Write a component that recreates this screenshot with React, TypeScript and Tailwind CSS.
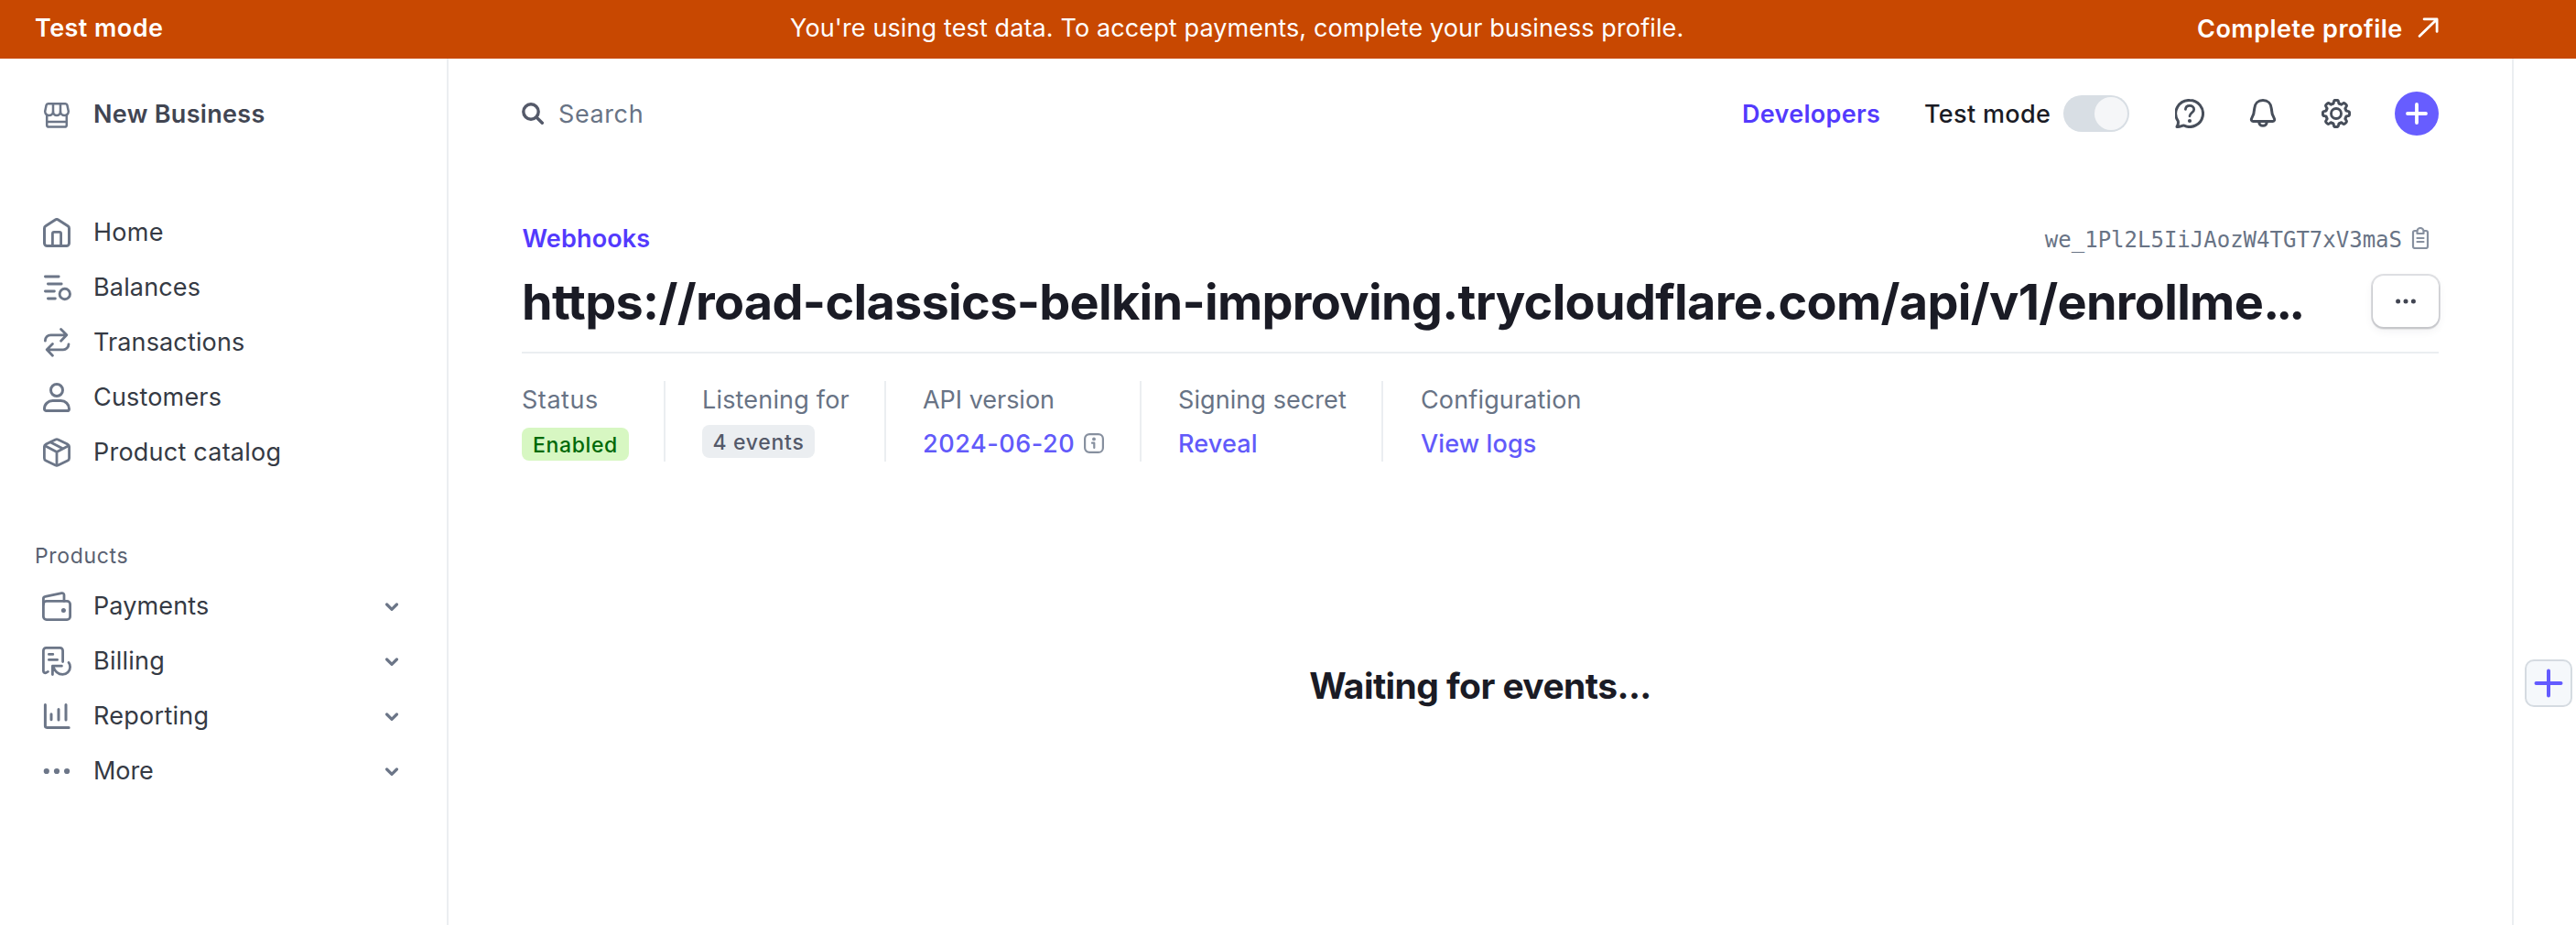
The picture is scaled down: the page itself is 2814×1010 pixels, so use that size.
import type { ReactNode } from "react";

function Icon({ children, className = "" }: { children: ReactNode; className?: string }) {
  return (
    <svg
      viewBox="0 0 16 16"
      className={`size-8 shrink-0 ${className}`}
      fill="none"
      stroke="currentColor"
      strokeWidth="1.5"
      strokeLinecap="round"
      strokeLinejoin="round"
    >
      {children}
    </svg>
  );
}

const ShopIcon = () => (
  <Icon>
    <g strokeWidth="1.25">
      <path d="M3.3 1.6h9.4c.5 0 .9.3 1 .8l.7 3.4c0 1.3-.9 2.2-2.2 2.2-1.2 0-2.2-.9-2.2-2.1 0 1.2-.9 2.1-2 2.1s-2-.9-2-2.1C6 7.1 5 8 3.8 8 2.5 8 1.6 7.1 1.6 5.8l.7-3.4c.1-.5.5-.8 1-.8z" />
      <path d="M6 1.8v4M10 1.8v4" />
      <path d="M2.6 8v5.2c0 .6.5 1.1 1.1 1.1h8.6c.6 0 1.1-.5 1.1-1.1V8M2.6 11.5h10.8" />
    </g>
  </Icon>
);

const HomeIcon = () => (
  <Icon>
    <path d="M1.25 5.6c0-.5.27-1 .7-1.26L7.2 1a1.5 1.5 0 0 1 1.6 0l5.25 3.34c.43.27.7.75.7 1.26v8.15a1.5 1.5 0 0 1-1.5 1.5H2.75a1.5 1.5 0 0 1-1.5-1.5z" />
    <path strokeWidth="1.4" strokeLinecap="butt" d="M5.7 15.2V8.5a.8.8 0 0 1 .8-.8h3a.8.8 0 0 1 .8.8v6.7" />
  </Icon>
);

const BalancesIcon = () => (
  <Icon>
    <g strokeWidth="1.4">
      <path d="M1.7 2h7.4M3.2 6h7.4M1.7 10h5M3.2 14h4" />
      <circle cx="12.4" cy="11.5" r="2.85" strokeWidth="1.45" />
    </g>
  </Icon>
);

const TransactionsIcon = () => (
  <Icon>
    <g strokeWidth="1.4">
      <path d="M1.7 7.1v-.2a3 3 0 0 1 3-3h8.5M10.3.8l3.1 3.1-3.1 3.2" />
      <path d="M14.5 8.9a3 3 0 0 1-3 3H2.9M5.7 8.8 2.6 11.9l3.1 3.2" />
    </g>
  </Icon>
);

const CustomersIcon = () => (
  <Icon>
    <circle cx="8" cy="4" r="3.25" />
    <path d="M1.25 14.2c0-2.5 2-4.45 4.5-4.45h4.5c2.5 0 4.5 1.95 4.5 4.45 0 .6-.45 1.05-1.05 1.05H2.3c-.6 0-1.05-.45-1.05-1.05z" />
  </Icon>
);

const BoxIcon = () => (
  <Icon>
    <g strokeWidth="1.4">
      <path d="M7.3.95a1.6 1.6 0 0 1 1.4 0l5.2 2.5c.55.27.9.8.9 1.4v6.3c0 .6-.35 1.13-.9 1.4l-5.2 2.5a1.6 1.6 0 0 1-1.4 0l-5.2-2.5a1.55 1.55 0 0 1-.9-1.4v-6.3c0-.6.35-1.13.9-1.4z" />
      <path d="M1.6 4.4 8 7.7l6.4-3.3M8 7.7v7.2M4.7 2.5l6.3 3.3" />
    </g>
  </Icon>
);

const WalletIcon = () => (
  <Icon>
    <rect x=".7" y="5.2" width="14.6" height="10.1" rx="1.7" strokeWidth="1.4" />
    <path strokeWidth="1.4" d="M.7 7V3.9c0-.6.4-1.1 1-1.2L10.7.8c.7-.15 1.3.35 1.3 1.05v3.3" />
    <circle cx="11.7" cy="10.2" r="1.25" fill="currentColor" stroke="none" />
  </Icon>
);

const BillingIcon = () => (
  <Icon>
    <g strokeWidth="1.4">
      <path d="M3.2 13.7l-.9.5c-.8.4-1.6 0-1.6-.8V2.2A1.5 1.5 0 0 1 2.2.7h7.6a1.5 1.5 0 0 1 1.5 1.5v6.1" />
      <path d="M3.7 4.2h2.2M3.7 7.2h4.6" />
      <path d="M5.7 15.3v-4.7h5M6 10.9c.9 2.5 2.9 4.3 5.2 4.3a4.1 4.1 0 0 0 4.1-4.1c0-.9-.25-1.7-.8-2.4" />
    </g>
  </Icon>
);

const ReportingIcon = () => (
  <Icon>
    <path d="M1.7 1.8v11.5c0 .5.4.9.9.9h12M5 6.9v3M9 4.2v5.8M13 1.8V10" />
  </Icon>
);

const DotsIcon = () => (
  <Icon>
    <g fill="currentColor" stroke="none">
      <circle cx="2.4" cy="8" r="1.55" />
      <circle cx="8" cy="8" r="1.55" />
      <circle cx="13.55" cy="8" r="1.55" />
    </g>
  </Icon>
);

const HelpIcon = () => (
  <Icon>
    <path d="M8 .75a7.25 7.25 0 1 1-3 13.85c-1-.4-2 .9-4 .6.65-1 .95-1.9.6-3.2A7.25 7.25 0 0 1 8 .75z" />
    <path strokeWidth="1.4" d="M5.7 5.7c.1-1.3 1-2.05 2.3-2.05s2.35.85 2.35 2.05c0 1.7-2.35 1.9-2.35 3.7" />
    <circle cx="8" cy="12" r="1.05" fill="currentColor" stroke="none" />
  </Icon>
);

const BellIcon = () => (
  <Icon>
    <path d="M8 .75c-2.7 0-4.45 1.85-4.6 4.35-.15 2.6-.75 4.2-1.5 5.4-.5.8-.2 1.75.65 1.75h10.9c.85 0 1.15-.95.65-1.75-.75-1.2-1.35-2.8-1.5-5.4C12.45 2.6 10.7.75 8 .75z" />
    <path strokeLinecap="butt" d="M5.8 12.6a2.25 2.6 0 0 0 4.4 0" />
  </Icon>
);

const polar = (radius: number, degrees: number) => {
  const a = (degrees * Math.PI) / 180;
  return `${(8 + radius * Math.sin(a)).toFixed(2)} ${(8 - radius * Math.cos(a)).toFixed(2)}`;
};

const gearPath =
  Array.from({ length: 8 }, (_, i) => {
    const a = i * 45;
    return `${i ? "L" : "M"}${polar(6.3, a - 12)}Q${polar(7.3, a - 10)} ${polar(7.3, a - 5)}L${polar(7.3, a + 5)}Q${polar(7.3, a + 10)} ${polar(6.3, a + 12)}Q${polar(5.2, a + 15)} ${polar(5.8, a + 22.5)}Q${polar(5.2, a + 30)} ${polar(6.3, a + 33)}`;
  }).join("") + "Z";

const GearIcon = () => (
  <Icon>
    <path strokeWidth="1.45" d={gearPath} />
    <circle cx="8" cy="8" r="2.75" strokeWidth="1.45" />
  </Icon>
);

const Chevron = () => (
  <svg viewBox="0 0 16 10" className="h-[10px] w-4" fill="none" stroke="currentColor" strokeWidth="3.2" strokeLinecap="round" strokeLinejoin="round">
    <path d="M2.6 2 8 7.4 13.4 2" />
  </svg>
);

const mainNav = [
  { label: "Home", icon: <HomeIcon />, tracking: "tracking-[0.3px]" },
  { label: "Balances", icon: <BalancesIcon />, tracking: "tracking-[0.15px]" },
  { label: "Transactions", icon: <TransactionsIcon />, tracking: "tracking-[0.13px]" },
  { label: "Customers", icon: <CustomersIcon />, tracking: "tracking-[0.18px]" },
  { label: "Product catalog", icon: <BoxIcon />, tracking: "tracking-[0.23px]" },
];

const productNav = [
  { label: "Payments", icon: <WalletIcon />, tracking: "tracking-[0.12px]" },
  { label: "Billing", icon: <BillingIcon />, tracking: "tracking-[0.25px]" },
  { label: "Reporting", icon: <ReportingIcon />, tracking: "tracking-[0.28px]" },
  { label: "More", icon: <DotsIcon />, tracking: "tracking-[-0.1px]" },
];

function NavItem({ label, icon, tracking, expandable }: { label: string; icon: ReactNode; tracking: string; expandable?: boolean }) {
  return (
    <a className="flex h-[60px] items-center pr-[52px] pl-[46px] text-[#6c7688]">
      {icon}
      <span className={`ml-6 text-[#353a44] ${tracking}`}>{label}</span>
      {expandable && (
        <span className="ml-auto pt-px">
          <Chevron />
        </span>
      )}
    </a>
  );
}

function Sidebar() {
  return (
    <aside className="w-[490px] shrink-0 border-r-2 border-[#ebeef1] pt-[30px]">
      <div className="flex h-[60px] items-center pl-[46px] text-[#6c7688]">
        <span className="pt-1">
          <ShopIcon />
        </span>
        <span className="ml-6 pt-[2px] font-semibold tracking-[0.31px] text-[#414552]">New Business</span>
      </div>
      <nav className="mt-[70px]">
        {mainNav.map((item) => (
          <NavItem key={item.label} {...item} />
        ))}
      </nav>
      <div className="mt-[63px] h-10 pl-[38px] text-[23px] leading-10 tracking-[0.65px] text-[#596171]">Products</div>
      <nav className="mt-[5px]">
        {productNav.map((item) => (
          <NavItem key={item.label} {...item} expandable />
        ))}
      </nav>
    </aside>
  );
}

function TopBar() {
  return (
    <header className="flex h-[60px] items-center">
      <svg viewBox="0 0 24 24" className="size-6 text-[#545969]" fill="none" stroke="currentColor" strokeWidth="3.4" strokeLinecap="round">
        <circle cx="10" cy="10" r="8.2" />
        <path d="m16.5 16.5 5.8 5.8" />
      </svg>
      <span className="ml-4 pt-[2px] tracking-[0.6px] text-[#687385]">Search</span>
      <div className="ml-auto flex items-center">
        <a className="w-[199px] pt-[2px] font-semibold tracking-[0.3px] text-[#533afd]">Developers</a>
        <span className="w-[152px] pt-[2px] font-medium tracking-[0.34px] text-[#1a1b25]">Test mode</span>
        <span className="flex h-10 w-[72px] justify-end rounded-full bg-[#d8dee4] p-[2px]">
          <span className="size-9 rounded-full bg-[#f5f6f8]" />
        </span>
        <span className="ml-[50px] flex gap-12 text-[#474e5a]">
          <HelpIcon />
          <BellIcon />
          <GearIcon />
        </span>
        <span className="ml-12 flex size-12 items-center justify-center rounded-full bg-[#675dff]">
          <svg viewBox="0 0 24 24" className="size-6" stroke="#fff" strokeWidth="3.8" strokeLinecap="round">
            <path d="M12 2v20M2 12h20" />
          </svg>
        </span>
      </div>
    </header>
  );
}

function Stat({ label, tracking, className, children }: { label: string; tracking: string; className: string; children: ReactNode }) {
  return (
    <div className={className}>
      <div className={`h-10 leading-[42px] text-[#687385] ${tracking}`}>{label}</div>
      <div className="mt-2 flex h-10 items-center font-medium text-[#625afa]">{children}</div>
    </div>
  );
}

export default function App() {
  return (
    <div className="flex h-[1010px] w-[2814px] flex-col overflow-hidden bg-white font-['Inter',sans-serif] text-[27px] leading-10 whitespace-nowrap">
      <div className="flex h-16 shrink-0 items-center bg-[#c84801] pb-[2px] pl-[38px] text-white">
        <span className="w-[825px] font-semibold tracking-[0.44px]">Test mode</span>
        <span className="tracking-[0.12px]">You're using test data. To accept payments, complete your business profile.</span>
        <a className="ml-auto flex items-center pr-[149px]">
          <span className="w-[241px] pt-[2px] font-semibold tracking-[0.5px]">Complete profile</span>
          <svg viewBox="0 0 24 24" className="size-6" fill="none" stroke="currentColor" strokeWidth="2.8" strokeLinecap="round" strokeLinejoin="round">
            <path d="M2 20.4 20.6 2.5M7.1 1.9h14v13.5" />
          </svg>
        </a>
      </div>

      <div className="flex min-h-0 flex-1">
        <Sidebar />

        <main className="w-[2256px] shrink-0 border-r-2 border-[#ebeef1] px-20 pt-[30px]">
          <TopBar />

          <div className="mt-[86px] flex h-10 items-center justify-between">
            <a className="pt-[2px] pl-[0.5px] font-semibold tracking-[0.15px] text-[#533afd]">Webhooks</a>
            <div className="flex items-center pr-2 text-[#687385]">
              <span className="pt-[3px] font-['DejaVu_Sans_Mono',monospace] text-[24px] leading-9">we_1Pl2L5IiJAozW4TGT7xV3maS</span>
              <svg viewBox="0 0 24 24" className="ml-2 size-6 text-[#87909f]" fill="none" stroke="currentColor" strokeWidth="2.2" strokeLinecap="round" strokeLinejoin="round">
                <path d="M8 4H6a2 2 0 0 0-2 2v15a2 2 0 0 0 2 2h12a2 2 0 0 0 2-2V6a2 2 0 0 0-2-2h-2" />
                <path d="M8.5 7V4.5a3.5 3.5 0 0 1 7 0V7zM8.5 12h7M8.5 16h7" />
              </svg>
            </div>
          </div>

          <div className="mt-[19px] flex h-[60px] items-center justify-between">
            <h1 className="pt-[2px] text-[54px] leading-[60px] font-bold tracking-[-0.7px] text-[#1a1b25]">
              https://road-classics-belkin-improving.trycloudflare.com/api/v1/enrollme
              <span className="tracking-[-4px]">...</span>
            </h1>
            <button className="flex h-14 w-[72px] items-center justify-center rounded-[12px] bg-white text-[#414552] shadow-[0_0_0_2px_rgba(60,66,87,0.16),0_2px_1px_1px_rgba(0,0,0,0.08),0_4px_10px_rgba(60,66,87,0.08)]">
              <svg viewBox="0 0 24 6" className="h-[6px] w-6" fill="currentColor">
                <circle cx="3.6" cy="3" r="2.5" />
                <circle cx="12" cy="3" r="2.5" />
                <circle cx="20.4" cy="3" r="2.5" />
              </svg>
            </button>
          </div>

          <section className="mt-[25px] flex border-t-2 border-[#ebeef1] pt-[30px]">
            <Stat label="Status" tracking="tracking-[0.55px]" className="w-[157px] border-r-2 border-[#ebeef1]">
              <span className="mt-[2px] h-9 w-[117px] rounded-[8px] bg-[#d7f7c2] text-center text-[23px] leading-[38px] tracking-[0.62px] text-[#006908]">
                Enabled
              </span>
            </Stat>
            <Stat label="Listening for" tracking="tracking-[0.18px]" className="w-[241px] border-r-2 border-[#ebeef1] pl-10">
              <span className="-mt-1 h-9 w-[123px] rounded-[8px] bg-[#ebeef1] text-center text-[23px] leading-[38px] tracking-[0.7px] text-[#545969]">
                4 events
              </span>
            </Stat>
            <Stat label="API version" tracking="tracking-[-0.02px]" className="w-[279px] border-r-2 border-[#ebeef1] pl-10">
              <span className="w-[176px] pt-[2px] tracking-[0.55px]">2024-06-20</span>
              <svg viewBox="0 0 22 22" className="size-[22px] text-[#87909f]" fill="none" stroke="currentColor" strokeWidth="2.2" strokeLinecap="round" strokeLinejoin="round">
                <rect x="1.1" y="1.1" width="19.8" height="19.8" rx="5" />
                <path d="M9 10.7h2.3v5.3" />
                <circle cx="11" cy="6.4" r="1.9" fill="currentColor" stroke="none" />
              </svg>
            </Stat>
            <Stat label="Signing secret" tracking="tracking-[0.08px]" className="w-[264px] border-r-2 border-[#ebeef1] pl-10">
              <span className="pt-[2px] tracking-[0.15px]">Reveal</span>
            </Stat>
            <Stat label="Configuration" tracking="tracking-[0.15px]" className="pl-[41px]">
              <span className="pt-[2px] tracking-[0.12px]">View logs</span>
            </Stat>
          </section>

          <h2 className="mt-[215px] text-center text-[39px] leading-[60px] font-bold tracking-[-0.58px] text-[#1a1b25]">Waiting for events...</h2>
        </main>

        <div className="flex-1 pt-[656px] pl-3">
          <button className="flex size-[52px] items-center justify-center rounded-[10px] border-2 border-[#d5dbe1] bg-[#f5f8fb]">
            <svg viewBox="0 0 32 32" className="size-8" stroke="#635bff" strokeWidth="4" strokeLinecap="round">
              <path d="M16 2.5v27M2.5 16h27" />
            </svg>
          </button>
        </div>
      </div>
    </div>
  );
}
